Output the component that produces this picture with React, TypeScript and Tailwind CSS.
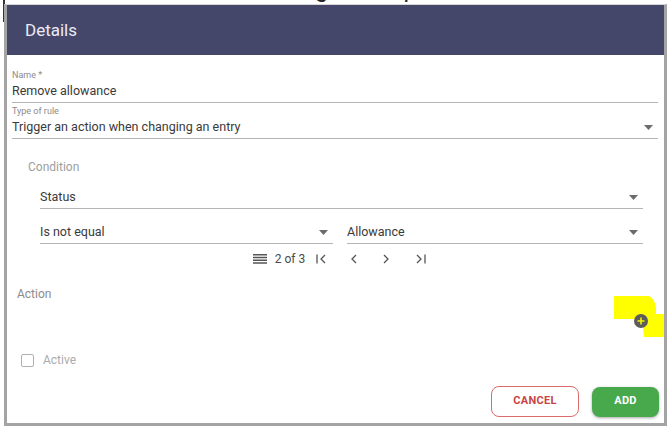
import React from "react";

const Arrow = () => (
  <svg width="9" height="5" viewBox="0 0 9 5" className="shrink-0">
    <path d="M0 0 L9 0 L4.5 5 Z" fill="#6b6b6b" />
  </svg>
);

const Field = ({ text, arrow, className = "" }: { text: string; arrow?: boolean; className?: string }) => (
  <div className={"flex items-center justify-between h-[23px] border-b border-[#b5b5b5] " + className}>
    <span className="text-[12.5px] text-[#3a3a3a] leading-[22px]">{text}</span>
    {arrow && (
      <span className="pr-[5px] flex items-center">
        <Arrow />
      </span>
    )}
  </div>
);

export default function App() {
  return (
    <div
      className="relative w-[670px] h-[432px] bg-white overflow-hidden"
      style={{ fontFamily: "Roboto, 'Liberation Sans', sans-serif" }}
    >
      {/* background page text (behind dialog) */}
      <div className="absolute top-[-25px] left-[122px] text-[24px] leading-[28px] text-[#222] whitespace-nowrap tracking-[1px]">
        Business rule Page Component Allowance
      </div>
      <div className="absolute left-[3px] top-[0px] w-[2px] h-[22px] bg-[#333]" />

      {/* dialog */}
      <div className="absolute left-[4px] top-[4px] w-[663px] h-[422px] border-l-[3px] border-r-[3px] border-b-[3px] border-t border-t-[#d8d8d8] border-l-[#a4a4a4] border-r-[#a4a4a4] border-b-[#a4a4a4] bg-white flex flex-col">
        <div className="h-[50px] bg-[#44476a] flex items-center pl-[18px] shrink-0">
          <span className="text-[17px] text-[#eceaf4] leading-none">Details</span>
        </div>

        <div className="flex flex-col px-[5px] pr-[6px] pt-[15px]">
          <div className="text-[9px] leading-[10px] text-[#8a8a8a]">Name *</div>
          <Field text="Remove allowance" />
          <div className="text-[9px] leading-[10px] text-[#8a8a8a] mt-[3px]">Type of rule</div>
          <Field text="Trigger an action when changing an entry" arrow />
        </div>

        <div className="flex flex-col pl-[21px] pr-[21px] mt-[20px]">
          <div className="text-[12px] leading-[16px] text-[#9e9e9e]">Condition</div>
          <div className="pl-[12px] mt-[11px]">
            <Field text="Status" arrow />
            <div className="flex gap-[14px] mt-[12px]">
              <Field text="Is not equal" arrow className="w-[293px]" />
              <Field text="Allowance" arrow className="flex-1" />
            </div>
          </div>
        </div>

        <div className="flex items-center justify-center h-[19px] mt-[5px] text-[#555]">
          <div className="flex items-center ml-[8px]">
            <svg width="14" height="10" viewBox="0 0 14 10">
              <path d="M0 0.75H14M0 3.5H14M0 6.25H14M0 9H14" stroke="#555" strokeWidth="1.3" />
            </svg>
            <span className="text-[12px] ml-[8px] text-[#4a4a4a]">2 of 3</span>
            <svg width="12" height="10" viewBox="0 0 12 10" className="ml-[11px]">
              <path d="M1 0.5V9.5M9 1 L5 5 L9 9" stroke="#555" strokeWidth="1.3" fill="none" />
            </svg>
            <svg width="8" height="10" viewBox="0 0 8 10" className="ml-[22px]">
              <path d="M6 1 L2 5 L6 9" stroke="#555" strokeWidth="1.3" fill="none" />
            </svg>
            <svg width="8" height="10" viewBox="0 0 8 10" className="ml-[24px]">
              <path d="M2 1 L6 5 L2 9" stroke="#555" strokeWidth="1.3" fill="none" />
            </svg>
            <svg width="12" height="10" viewBox="0 0 12 10" className="ml-[24px]">
              <path d="M3 1 L7 5 L3 9M11 0.5V9.5" stroke="#555" strokeWidth="1.3" fill="none" />
            </svg>
          </div>
        </div>

        <div className="text-[12px] leading-[15px] text-[#8c8c8c] pl-[10px] mt-[19px]">Action</div>

        <div className="relative h-[30px] mt-[6px]">
          {/* highlighter annotation */}
          <svg width="56" height="46" viewBox="0 0 56 46" className="absolute left-[604px] top-[-14px]">
            <path d="M3 2 L38 2 Q43 4 45 13 L45 20 L53 20 L53 43 L33 43 L31 25 L3 25 Z" fill="#ffff00" />
          </svg>
          <div className="absolute left-[627px] top-[6px] w-[14px] h-[14px] rounded-full bg-[#5c5c5c] flex items-center justify-center">
            <svg width="8" height="8" viewBox="0 0 8 8">
              <path d="M4 0.5V7.5M0.5 4H7.5" stroke="#f2f200" strokeWidth="1.6" />
            </svg>
          </div>
        </div>

        <div className="flex items-center pl-[14px] mt-[13px]">
          <div className="w-[13px] h-[13px] border-[1.5px] border-[#b0b0b0] rounded-[2px]" />
          <span className="text-[12px] text-[#ababab] ml-[9px]">Active</span>
        </div>

        <div className="flex-1" />
        <div className="flex justify-end items-center gap-[13px] pr-[5px] pb-[6px]">
          <div className="w-[88px] h-[31px] rounded-[8px] border-[1.5px] border-[#dc6b6b] flex items-center justify-center text-[11px] font-bold text-[#c94545] tracking-[0.3px]">
            CANCEL
          </div>
          <div className="w-[67px] h-[30px] rounded-[8px] bg-[#48a94c] shadow-[0_1px_3px_rgba(0,0,0,0.35)] flex items-center justify-center text-[11px] font-bold text-white tracking-[0.3px]">
            ADD
          </div>
        </div>
      </div>
    </div>
  );
}
